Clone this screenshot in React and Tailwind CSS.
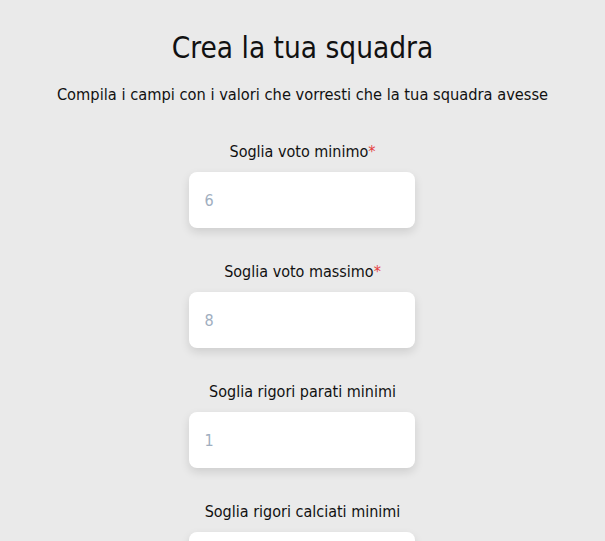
const FIELDS = [
  { label: 'Soglia voto minimo', placeholder: '6', required: true },
  { label: 'Soglia voto massimo', placeholder: '8', required: true },
  { label: 'Soglia rigori parati minimi', placeholder: '1' },
  { label: 'Soglia rigori calciati minimi', placeholder: '1' },
]

export default function App() {
  return (
    <div
      className="min-h-screen bg-[#eaeaea] text-[#111] flex flex-col items-center pt-[28px]"
      style={{ fontFamily: '"Liberation Sans Narrow", "DejaVu Sans Condensed", sans-serif' }}
    >
      <h1 className="text-[29.5px] leading-[40px]">Crea la tua squadra</h1>
      <p className="mt-[16px] text-[16.3px] leading-[22px]">
        Compila i campi con i valori che vorresti che la tua squadra avesse
      </p>

      <div className="mt-[35px] flex flex-col items-center gap-[33px]">
        {FIELDS.map((f) => (
          <div key={f.label} className="flex flex-col items-center">
            <label className="text-[16px] leading-[22px]">
              {f.label}
              {f.required && <span className="text-[#e53e3e]">*</span>}
            </label>
            <input
              type="text"
              placeholder={f.placeholder}
              className="mt-[9px] mr-[2px] w-[226px] h-[56px] rounded-[8px] bg-white px-[16px] text-[16px] placeholder:text-[#a0aec0] shadow-[0_4px_10px_rgba(0,0,0,0.12)] outline-none"
            />
          </div>
        ))}
      </div>
    </div>
  )
}
